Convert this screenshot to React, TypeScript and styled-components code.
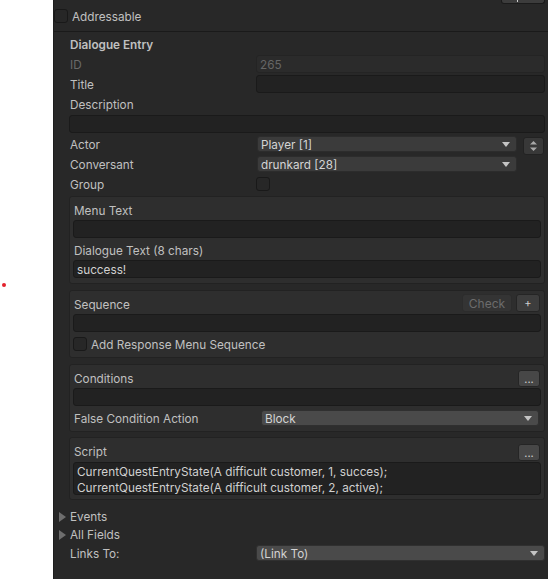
import React from 'react';
import styled, { createGlobalStyle } from 'styled-components';

const GlobalStyle = createGlobalStyle`
  html, body {
    margin: 0;
    padding: 0;
    background: #ffffff;
  }
  body {
    font-family: Inter, 'Noto Sans', sans-serif;
    font-size: 11.75px;
  }
`;

const Page = styled.div`
  display: flex;
  width: 548px;
  height: 579px;
  overflow: hidden;
`;

const Gutter = styled.div`
  width: 53px;
  flex-shrink: 0;
  box-sizing: border-box;
  padding: 283px 0 0 2px;
`;

const Dot = styled.div`
  width: 4px;
  height: 4px;
  border-radius: 50%;
  background: #e3222c;
`;

const Panel = styled.div`
  flex: 1;
  display: flex;
  flex-direction: column;
  background: #282828;
  border-left: 1px solid #1e1e1e;
  color: #c0c0c0;
`;

const TopStrip = styled.div`
  height: 4px;
  display: flex;
  justify-content: flex-end;
  padding-right: 3px;
`;

const TopButton = styled.div`
  position: relative;
  width: 42px;
  height: 3px;
  background: #3c3c3c;
  border: 1px solid #1b1b1b;
  border-top: none;
  border-radius: 0 0 3px 3px;
  &::after {
    content: '';
    position: absolute;
    left: 15px;
    top: 0;
    width: 1px;
    height: 2px;
    background: #d0d0d0;
  }
`;

const Separator = styled.div`
  height: 1px;
  margin-top: 5px;
  background: #1a1a1a;
`;

const Content = styled.div`
  display: flex;
  flex-direction: column;
  padding: 2px 3px 0 15px;
`;

const Row = styled.div<{ $h?: number; $mt?: number }>`
  display: flex;
  align-items: center;
  height: ${(p) => p.$h ?? 20}px;
  margin-top: ${(p) => p.$mt ?? 0}px;
  flex-shrink: 0;
`;

const Label = styled.span<{ $w?: number; $dim?: boolean; $bold?: boolean; $grow?: boolean }>`
  flex-shrink: 0;
  ${(p) => (p.$grow ? 'flex: 1;' : `width: ${p.$w ?? 187}px;`)}
  padding: 2px 0 0 1px;
  box-sizing: border-box;
  white-space: nowrap;
  color: ${(p) => (p.$dim ? '#6a6a6a' : '#c0c0c0')};
  font-weight: ${(p) => (p.$bold ? 600 : 400)};
`;

const Field = styled.div<{ $disabled?: boolean; $mb?: number }>`
  flex: 1;
  height: 18px;
  box-sizing: border-box;
  display: flex;
  align-items: center;
  padding: 2px 0 0 3px;
  background: ${(p) => (p.$disabled ? '#2b2b2b' : '#222222')};
  border: 1px solid ${(p) => (p.$disabled ? '#242424' : '#1a1a1a')};
  border-radius: 3px;
  color: ${(p) => (p.$disabled ? '#666666' : '#d0d0d0')};
  margin-bottom: ${(p) => p.$mb ?? 0}px;
`;

const BlockField = styled(Field)`
  flex: none;
`;

const Dropdown = styled.div<{ $w?: number; $tone?: 'dark' | 'light'; $mr?: number; $ml?: number }>`
  ${(p) => (p.$w ? `width: ${p.$w}px; flex-shrink: 0;` : 'flex: 1;')}
  height: 16px;
  box-sizing: border-box;
  display: flex;
  align-items: center;
  justify-content: space-between;
  padding: 0 6px 0 3px;
  margin-right: ${(p) => p.$mr ?? 0}px;
  margin-left: ${(p) => p.$ml ?? 0}px;
  background: ${(p) => (p.$tone === 'light' ? '#4a4a4a' : '#3b3b3b')};
  border: 1px solid ${(p) => (p.$tone === 'light' ? '#303030' : '#2c2c2c')};
  border-radius: 3px;
  color: #d4d4d4;
  white-space: nowrap;
`;

const DropText = styled.span`
  padding-top: 2px;
`;

const Stepper = styled.div`
  width: 21px;
  height: 18px;
  margin: 3px 0 0 6px;
  box-sizing: border-box;
  display: flex;
  align-items: center;
  justify-content: center;
  background: #383838;
  border: 1px solid #222222;
  border-radius: 3px;
`;

const Checkbox = styled.div`
  width: 14px;
  height: 14px;
  box-sizing: border-box;
  flex-shrink: 0;
  background: #272727;
  border: 1px solid #191919;
  border-radius: 3px;
`;

const CheckLabel = styled.span`
  margin-left: 4px;
  padding-top: 2px;
  white-space: nowrap;
`;

const Group = styled.div<{ $mt: number; $pb?: number }>`
  display: flex;
  flex-direction: column;
  margin-top: ${(p) => p.$mt}px;
  padding: 3px 3px ${(p) => p.$pb ?? 3}px 3px;
  background: #2e2e2e;
  border: 1px solid #222222;
  border-radius: 3px;
`;

const SmallButton = styled.div<{ $w: number; $h?: number; $mt?: number; $variant?: 'off' | 'normal' | 'light' }>`
  width: ${(p) => p.$w}px;
  height: ${(p) => p.$h ?? 18}px;
  box-sizing: border-box;
  align-self: flex-start;
  margin-top: ${(p) => p.$mt ?? 0}px;
  margin-left: 4px;
  display: flex;
  align-items: center;
  justify-content: center;
  padding-top: 1px;
  border-radius: 3px;
  font-size: ${(p) => (p.$variant === 'off' ? 12 : 11)}px;
  background: ${(p) => (p.$variant === 'off' ? '#343434' : p.$variant === 'light' ? '#474747' : '#3d3d3d')};
  border: 1px solid ${(p) => (p.$variant === 'off' ? '#2c2c2c' : '#252525')};
  color: ${(p) => (p.$variant === 'off' ? '#6c6c6c' : '#cfcfcf')};
`;

const ButtonRight = styled.div`
  display: flex;
  margin-right: 1px;
`;

const TextArea = styled.div`
  height: 33px;
  margin-top: 1px;
  box-sizing: border-box;
  padding: 1px 3px 0;
  background: #222222;
  border: 1px solid #1a1a1a;
  border-radius: 3px;
  color: #d0d0d0;
  line-height: 16px;
  white-space: nowrap;
  overflow: hidden;
`;

const Foldout = styled.div<{ $mt?: number }>`
  display: flex;
  align-items: center;
  height: 18px;
  margin: ${(p) => p.$mt ?? 0}px 0 0 -10px;
  color: #c0c0c0;
`;

const FoldoutText = styled.span`
  padding-top: 2px;
`;

const FoldoutArrow = styled.span`
  display: inline-block;
  width: 0;
  height: 0;
  border-top: 5px solid transparent;
  border-bottom: 5px solid transparent;
  border-left: 7px solid #6e6e6e;
  margin: 1px 4px 0 0;
`;

const Arrow = () => (
  <svg width="8" height="5" viewBox="0 0 8 5">
    <path d="M0 0 H8 L4 5 Z" fill="#c4c4c4" />
  </svg>
);

const UpDown = () => (
  <svg width="7" height="10" viewBox="0 0 7 10">
    <path d="M3.5 0 L7 3.5 H0 Z M0 6.5 H7 L3.5 10 Z" fill="#a8a8a8" />
  </svg>
);

export default function App() {
  return (
    <>
      <GlobalStyle />
      <Page>
        <Gutter>
          <Dot />
        </Gutter>
        <Panel>
          <TopStrip>
            <TopButton />
          </TopStrip>
          <Row $mt={2}>
            <Checkbox />
            <CheckLabel>Addressable</CheckLabel>
          </Row>
          <Separator />
          <Content>
            <Row>
              <Label $bold>Dialogue Entry</Label>
            </Row>
            <Row>
              <Label $dim>ID</Label>
              <Field $disabled>265</Field>
            </Row>
            <Row>
              <Label>Title</Label>
              <Field />
            </Row>
            <Row>
              <Label>Description</Label>
            </Row>
            <Row>
              <Field />
            </Row>
            <Row>
              <Label>Actor</Label>
              <Dropdown $w={260} $ml={1}>
                <DropText>Player [1]</DropText>
                <Arrow />
              </Dropdown>
              <Stepper>
                <UpDown />
              </Stepper>
            </Row>
            <Row>
              <Label>Conversant</Label>
              <Dropdown $w={260} $ml={1}>
                <DropText>drunkard [28]</DropText>
                <Arrow />
              </Dropdown>
            </Row>
            <Row>
              <Label>Group</Label>
              <Checkbox />
            </Row>

            <Group $mt={2}>
              <Row>
                <Label>Menu Text</Label>
              </Row>
              <BlockField $mb={2} />
              <Row>
                <Label>Dialogue Text (8 chars)</Label>
              </Row>
              <BlockField $mb={2}>success!</BlockField>
            </Group>

            <Group $mt={6}>
              <Row>
                <Label $grow>Sequence</Label>
                <ButtonRight>
                  <SmallButton $w={50} $mt={-3} $variant="off">Check</SmallButton>
                  <SmallButton $w={24} $mt={-3}>+</SmallButton>
                </ButtonRight>
              </Row>
              <BlockField $mb={2} />
              <Row>
                <Checkbox />
                <CheckLabel>Add Response Menu Sequence</CheckLabel>
              </Row>
            </Group>

            <Group $mt={6}>
              <Row>
                <Label $grow>Conditions</Label>
                <ButtonRight>
                  <SmallButton $w={22} $h={17} $mt={1} $variant="light">...</SmallButton>
                </ButtonRight>
              </Row>
              <BlockField $mb={2} />
              <Row>
                <Label $w={188}>False Condition Action</Label>
                <Dropdown $tone="light" $mr={2}>
                  <DropText>Block</DropText>
                  <Arrow />
                </Dropdown>
              </Row>
            </Group>

            <Group $mt={5} $pb={4}>
              <Row>
                <Label $grow>Script</Label>
                <ButtonRight>
                  <SmallButton $w={22} $h={17} $mt={2} $variant="light">...</SmallButton>
                </ButtonRight>
              </Row>
              <TextArea>
                CurrentQuestEntryState(A difficult customer, 1, succes);
                <br />
                CurrentQuestEntryState(A difficult customer, 2, active);
              </TextArea>
            </Group>

            <Foldout $mt={7}>
              <FoldoutArrow />
              <FoldoutText>Events</FoldoutText>
            </Foldout>
            <Foldout>
              <FoldoutArrow />
              <FoldoutText>All Fields</FoldoutText>
            </Foldout>
            <Row>
              <Label>Links To:</Label>
              <Dropdown $tone="light">
                <DropText>(Link To)</DropText>
                <Arrow />
              </Dropdown>
            </Row>
          </Content>
        </Panel>
      </Page>
    </>
  );
}
